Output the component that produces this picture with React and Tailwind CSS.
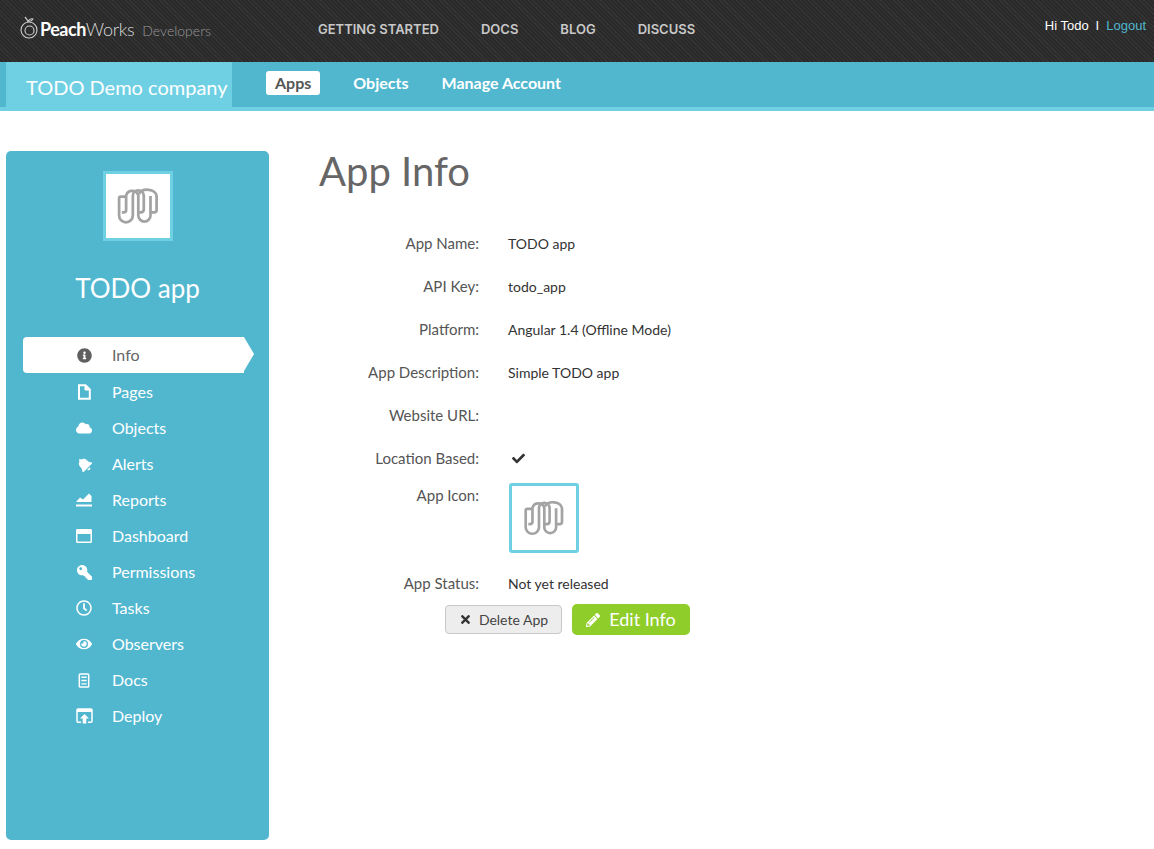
import React from 'react';
import {
  FaInfoCircle, FaCloud, FaBell, FaRegWindowMaximize, FaKey, FaRegClock, FaEye, FaCheck, FaTimes, FaPencilAlt,
} from 'react-icons/fa';

function AppLogo() {
  return (
    <svg viewBox="12 12 210 210" className="w-full h-full" fill="none" stroke="#a3a3a3" strokeWidth="9" strokeLinecap="butt">
      <path d="M76 86 H60 Q55 86 55 92 V148 A22.5 22.5 0 0 0 100 148 V84 A18 18 0 0 1 136 84 V128 Q136 138 126 138 H116" />
      <path d="M64 138 H70 Q78 138 78 130 V82 A21 21 0 0 1 118 82 V148 A20 20 0 0 0 158 148 V84" />
      <path d="M120 78 A30 22 0 0 1 178 84 V130 Q178 138 170 138 H160" />
    </svg>
  );
}

function PageIcon() {
  return (
    <svg viewBox="0 0 14 16" className="w-[14px] h-[16px]" fill="none" stroke="white" strokeWidth="2">
      <path d="M2 1.2 H8.5 L12.8 5.5 V14.8 H2 Z" />
      <path d="M8 1 V6 H13" fill="white" strokeWidth="1" />
    </svg>
  );
}

function ReportIcon() {
  return (
    <svg viewBox="0 0 16 14" className="w-[16px] h-[14px]" fill="white">
      <path d="M0 9 L4 4.5 L7 6.5 L13 0.5 L15.5 3 V9 Z" />
      <rect x="0" y="11.5" width="16" height="2" />
    </svg>
  );
}

function DocsIcon() {
  return (
    <svg viewBox="0 0 12 16" className="w-[12px] h-[15px]" fill="none" stroke="white" strokeWidth="1.6">
      <rect x="1" y="1" width="10" height="14" rx="1" />
      <path d="M3.2 4.5 H8.8 M3.2 8 H8.8 M3.2 11.5 H8.8" strokeWidth="1.4" />
    </svg>
  );
}

function DeployIcon() {
  return (
    <svg viewBox="0 0 17 16" className="w-[17px] h-[16px]" fill="none" stroke="white" strokeWidth="1.5">
      <path d="M5 14.2 H2 Q1 14.2 1 13 V2 Q1 1 2 1 H15 Q16 1 16 2 V13 Q16 14.2 15 14.2 H12" />
      <rect x="1" y="1" width="15" height="3" fill="white" stroke="none" />
      <path d="M8.5 6 L13 10.5 H10.3 V15.5 H6.7 V10.5 H4 Z" fill="white" stroke="none" />
    </svg>
  );
}

const sideItems = [
  { label: 'Info', icon: <FaInfoCircle className="text-[15px] text-[#5f5f5f]" />, active: true },
  { label: 'Pages', icon: <PageIcon /> },
  { label: 'Objects', icon: <FaCloud className="text-[16px]" /> },
  { label: 'Alerts', icon: <FaBell className="text-[15px] -rotate-45" /> },
  { label: 'Reports', icon: <ReportIcon /> },
  { label: 'Dashboard', icon: <FaRegWindowMaximize className="text-[16px]" /> },
  { label: 'Permissions', icon: <FaKey className="text-[15px] -scale-x-100" /> },
  { label: 'Tasks', icon: <FaRegClock className="text-[16px]" /> },
  { label: 'Observers', icon: <FaEye className="text-[16px]" /> },
  { label: 'Docs', icon: <DocsIcon /> },
  { label: 'Deploy', icon: <DeployIcon /> },
];

const rows = [
  { label: 'App Name:', value: 'TODO app' },
  { label: 'API Key:', value: 'todo_app' },
  { label: 'Platform:', value: 'Angular 1.4 (Offline Mode)' },
  { label: 'App Description:', value: 'Simple TODO app' },
  { label: 'Website URL:', value: '' },
];

function Row({ label, children }) {
  return (
    <div className="flex items-center h-[43px]">
      <div className="w-[160px] text-right text-[15px] text-[#555]">{label}</div>
      <div className="ml-[29px] text-[14px] text-[#333]">{children}</div>
    </div>
  );
}

function App() {
  return (
    <div className="min-h-[849px] bg-white font-['Lato',sans-serif]">
      <div className="h-[62px] flex bg-[#2f2f2f] bg-[repeating-linear-gradient(45deg,#343434_0,#343434_1px,#2a2a2a_1px,#2a2a2a_3px)]">
        <div className="w-[318px] pl-[20px] pt-[15px] flex items-start">
          <svg viewBox="0 0 18 23" className="w-[18px] h-[23px] mt-[1px]" fill="none" stroke="#cfcfcf" strokeWidth="1.1">
            <circle cx="9" cy="14" r="8" />
            <circle cx="9.5" cy="14.5" r="4.5" />
            <path d="M8 6 Q7 3 5 1 M8 5 Q10 2 13 3 Q11 6 8 5" />
          </svg>
          <span className="ml-[2px] mt-[2px] text-[18px] tracking-[-0.5px] leading-[24px] font-bold text-white">Peach</span>
          <span className="mt-[2px] text-[18px] tracking-[-0.3px] leading-[24px] font-light text-[#d8d8d8]">Works</span>
          <span className="ml-[8px] mt-[4px] text-[14px] leading-[24px] font-light text-[#999]">Developers</span>
        </div>
        <nav className="flex gap-[42px] pt-[21px] font-['Inter',sans-serif] font-semibold text-[13px] leading-[16px] text-[#c8c8c8]">
          <span>GETTING STARTED</span>
          <span>DOCS</span>
          <span>BLOG</span>
          <span>DISCUSS</span>
        </nav>
        <div className="ml-auto pr-[8px] pt-[18px] font-['Liberation_Sans',sans-serif] text-[13px] leading-[15px] text-white">
          Hi Todo<span className="mx-[7px]">I</span><span className="text-[#51b7cf]">Logout</span>
        </div>
      </div>

      <div className="h-[49px] flex pl-[6px] bg-[#51b7cf] border-b-4 border-[#6fd0e4]">
        <div className="w-[226px] h-[45px] bg-[#6fd0e4] pl-[20px] pt-[12px] text-[20px] leading-[26px] text-white">TODO Demo company</div>
        <div className="flex items-center gap-[33px] ml-[34px] h-[45px] pb-[4px] text-[16px] font-bold text-white">
          <span className="bg-white text-[#555] rounded-[3px] px-[9px] h-[24px] leading-[24px] ml-[0px] -mr-[0px]">Apps</span>
          <span>Objects</span>
          <span>Manage Account</span>
        </div>
      </div>

      <div className="flex pt-[40px] pl-[6px]">
        <aside className="w-[263px] h-[689px] bg-[#51b7cf] rounded-[5px] pt-[20px] flex flex-col items-center">
          <div className="w-[70px] h-[70px] bg-white border-[3px] border-[#6fd0e4]">
            <AppLogo />
          </div>
          <div className="mt-[29px] text-[26px] leading-[36px] text-white">TODO app</div>
          <ul className="mt-[30px] w-full pl-[17px] pr-[15px]">
            {sideItems.map(item => (
              <li
                key={item.label}
                className={'relative flex items-center h-[36px] text-[16px] ' + (item.active ? 'h-[34px] my-px bg-white rounded-l-[4px] text-[#666] w-[221px]' : 'text-white')}
              >
                <span className="w-[56px] pl-[33px] flex justify-center shrink-0 box-content -ml-[0px]">{item.icon}</span>
                <span className="ml-[-33px] pl-[33px]">{item.label}</span>
                {item.active && (
                  <span className="absolute left-full top-0 w-0 h-0 border-y-[17px] border-y-transparent border-l-[10px] border-l-white" />
                )}
              </li>
            ))}
          </ul>
        </aside>

        <main className="ml-[50px]">
          <h1 className="text-[40px] leading-[48px] text-[#666] -mt-[4px]">App Info</h1>
          <div className="mt-[27px] -ml-[0px]">
            {rows.map(r => (
              <Row key={r.label} label={r.label}>{r.value}</Row>
            ))}
            <Row label="Location Based:"><FaCheck className="text-[13px] text-[#333] ml-[4px]" /></Row>
            <div className="flex mt-[3px]">
              <div className="w-[160px] text-right text-[15px] text-[#555] leading-[24px]">App Icon:</div>
              <div className="ml-[30px] w-[70px] h-[70px] border-[3px] border-[#6fd0e4] rounded-[3px] bg-white p-[1px]">
                <AppLogo />
              </div>
            </div>
            <div className="mt-[9px]">
              <Row label="App Status:">Not yet released</Row>
            </div>
            <div className="flex items-center gap-[10px] ml-[126px] mt-[-1px]">
              <button className="w-[117px] h-[29px] flex items-center justify-center gap-[7px] bg-[#ededed] border border-[#c8c8c8] rounded-[4px] text-[14px] text-[#444]">
                <FaTimes className="text-[13px] text-[#333]" /> Delete App
              </button>
              <button className="w-[118px] h-[31px] flex items-center justify-center gap-[9px] bg-[#8fce2a] rounded-[5px] text-[18px] text-white">
                <FaPencilAlt className="text-[14px]" /> Edit Info
              </button>
            </div>
          </div>
        </main>
      </div>
    </div>
  );
}

export default App;
